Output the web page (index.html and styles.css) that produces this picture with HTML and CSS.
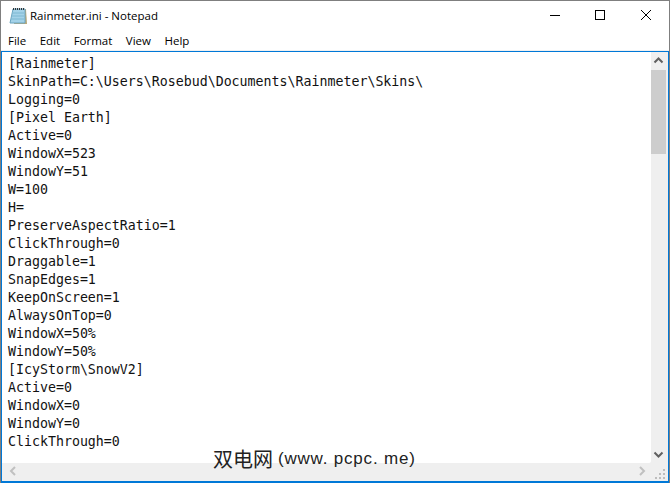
FILE: index.html
```
<!DOCTYPE html>
<html lang="en">
<head>
<meta charset="utf-8">
<title>Rainmeter.ini - Notepad</title>
<link rel="stylesheet" href="styles.css">
</head>
<body>
<div class="window">
  <header class="titlebar">
    <svg class="app-icon" width="20" height="20" viewBox="0 0 20 20">
      <path d="M5 3h13l1 15H6z" fill="#b9a878"/>
      <path d="M5 3h12l0 14H2z" fill="#a3d2e8" stroke="#6aa4c0" stroke-width="1"/>
      <path d="M4 7h12M3.500 10h12.500M3 13h13" stroke="#7cb8d2" stroke-width="1"/>
      <path d="M5 3h12" stroke="#333" stroke-width="2" stroke-dasharray="1 1"/>
    </svg>
    <span class="title">Rainmeter.ini - Notepad</span>
    <div class="controls">
      <svg class="control" width="46" height="29" viewBox="0 0 46 29"><path d="M19 14.500h10" stroke="#000"/></svg>
      <svg class="control" width="46" height="29" viewBox="0 0 46 29"><rect x="18.500" y="9.500" width="9" height="9" fill="none" stroke="#000"/></svg>
      <svg class="control" width="46" height="29" viewBox="0 0 46 29"><path d="M18 9l10 10M28 9l-10 10" stroke="#000"/></svg>
    </div>
  </header>
  <nav class="menubar">
    <span>File</span><span>Edit</span><span>Format</span><span>View</span><span>Help</span>
  </nav>
  <main class="client">
    <div class="editor-row">
      <pre class="editor">[Rainmeter]
SkinPath=C:\Users\Rosebud\Documents\Rainmeter\Skins\
Logging=0
[Pixel Earth]
Active=0
WindowX=523
WindowY=51
W=100
H=
PreserveAspectRatio=1
ClickThrough=0
Draggable=1
SnapEdges=1
KeepOnScreen=1
AlwaysOnTop=0
WindowX=50%
WindowY=50%
[IcyStorm\SnowV2]
Active=0
WindowX=0
WindowY=0
ClickThrough=0</pre>
      <div class="vscroll">
        <svg class="arrow" width="15" height="18" viewBox="0 0 15 18"><path d="M3.500 10.500l4-4 4 4" fill="none" stroke="#606060" stroke-width="2"/></svg>
        <div class="thumb"></div>
        <div class="track"></div>
        <svg class="arrow" width="15" height="17" viewBox="0 0 15 17"><path d="M3.500 6.500l4 4 4-4" fill="none" stroke="#606060" stroke-width="2"/></svg>
      </div>
    </div>
    <div class="hscroll">
      <svg class="arrow" width="17" height="18" viewBox="0 0 17 18"><path d="M13 4l-4 4 4 4" fill="none" stroke="#c0c0c0" stroke-width="2"/></svg>
      <div class="track"></div>
      <svg class="arrow" width="17" height="18" viewBox="0 0 17 18"><path d="M6 4l4 4-4 4" fill="none" stroke="#c0c0c0" stroke-width="2"/></svg>
      <svg class="grip" width="17" height="18" viewBox="0 0 17 18"><path d="M12 6h2v2h-2zM8 10h2v2H8zM12 10h2v2h-2zM4 14h2v2H4zM8 14h2v2H8zM12 14h2v2h-2z" fill="#bdbdbd"/></svg>
    </div>
  </main>
  <div class="watermark"><span class="wm-cjk">双电网</span><span class="wm-latin">(www. pcpc. me)</span></div>
</div>
</body>
</html>
```
FILE: styles.css
```
* { box-sizing: border-box; }
html, body { margin: 0; padding: 0; background: #fff; }
.window {
  position: relative;
  width: 670px;
  height: 483px;
  display: flex;
  flex-direction: column;
  background: #fff;
  border-top: 1px solid #7f7f7f;
  border-right: 1px solid #7f7f7f;
  border-left: 1px solid #7f7f7f;
  overflow: hidden;
  font-family: "Open Sans", "Liberation Sans", sans-serif;
  color: #000;
}
.titlebar {
  height: 29px;
  display: flex;
  align-items: center;
  padding-left: 7px;
  flex: none;
}
.app-icon { margin-right: 2px; flex: none; }
.title { font-size: 11.500px; flex: 1; }
.controls { display: flex; }
.control { display: block; }
.menubar {
  height: 21px;
  display: flex;
  align-items: center;
  gap: 13.500px;
  padding-left: 7px;
  font-size: 11.500px;
  flex: none;
  border-bottom: 1px solid #f0f0f0;
}
.client {
  flex: 1;
  min-height: 0;
  display: flex;
  flex-direction: column;
  background: #efefef;
  border: 1px solid #0078d7;
  border-width: 1px 1px 2px 1px;
}
.editor-row { flex: 1; min-height: 0; display: flex; }
.editor {
  flex: 1;
  margin: 0;
  background: #fff;
  padding: 3px 6px;
  font-family: "DejaVu Sans Mono", monospace;
  font-size: 13.280px;
  line-height: 18px;
  color: #111;
  border-bottom-right-radius: 2px;
  overflow: hidden;
}
.vscroll {
  width: 17px;
  display: flex;
  flex-direction: column;
  background: #efefef;
}
.vscroll .thumb { height: 84px; width: 15px; background: #cdcdcd; }
.vscroll .track { flex: 1; }
.arrow { display: block; flex: none; }
.hscroll { height: 18px; display: flex; flex: none; background: #efefef; }
.hscroll .track { flex: 1; }
.grip { display: block; flex: none; }
.watermark {
  position: absolute;
  left: 212px;
  top: 446px;
  display: flex;
  align-items: center;
  gap: 5px;
  line-height: 24px;
  color: #222;
  white-space: nowrap;
}
.wm-cjk { font-family: "Noto Sans CJK SC", sans-serif; font-size: 20px; }
.wm-latin { font-family: "Liberation Sans", sans-serif; font-size: 17px; letter-spacing: 0.800px; }
```
